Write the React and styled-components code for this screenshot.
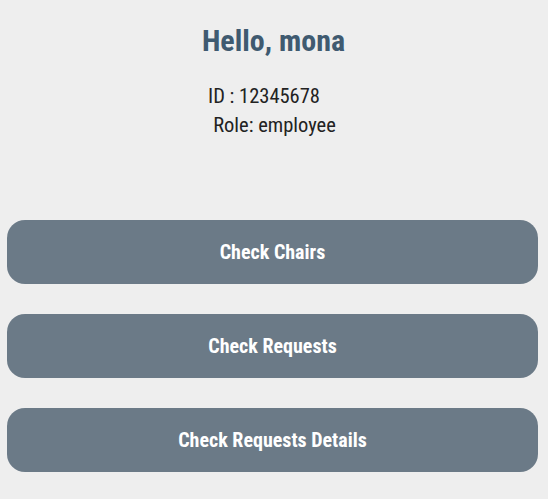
import React from "react"
import styled, { createGlobalStyle } from "styled-components"

const GlobalStyle = createGlobalStyle`
  body {
    margin: 0;
    background: #eeeeee;
    font-family: "Roboto Condensed", Roboto, "Liberation Sans", sans-serif;
    font-stretch: condensed;
  }
`

const Page = styled.div`
  display: flex;
  flex-direction: column;
  padding: 23px 10px 27px 7px;
`

const Greeting = styled.h1`
  color: #3f5a70;
  font-size: 30px;
  font-weight: 700;
  margin: 0;
  text-align: center;
  padding-left: 2px;
`

const Info = styled.p`
  color: #222;
  font-size: 20.5px;
  font-weight: 400;
  margin: ${props => props.top || 0}px 0 0;
  text-align: center;
  padding-left: ${props => props.left || 0}px;
  padding-right: ${props => props.right || 0}px;
  line-height: 29px;
`

const Actions = styled.div`
  display: flex;
  flex-direction: column;
  gap: 30px;
  margin-top: 80px;
`

const ActionButton = styled.button`
  background: #6b7a87;
  border: none;
  border-radius: 18px;
  color: #fff;
  font-family: inherit;
  font-stretch: condensed;
  font-size: 20px;
  font-weight: 700;
  height: 64px;
  width: 100%;
  cursor: pointer;
`

const App = () => {
  return (
    <>
      <GlobalStyle />
      <Page>
        <Greeting>Hello, mona</Greeting>
        <Info top={24} right={17}>ID : 12345678</Info>
        <Info left={4}>Role: employee</Info>
        <Actions>
          <ActionButton>Check Chairs</ActionButton>
          <ActionButton>Check Requests</ActionButton>
          <ActionButton>Check Requests Details</ActionButton>
        </Actions>
      </Page>
    </>
  )
}

export default App
